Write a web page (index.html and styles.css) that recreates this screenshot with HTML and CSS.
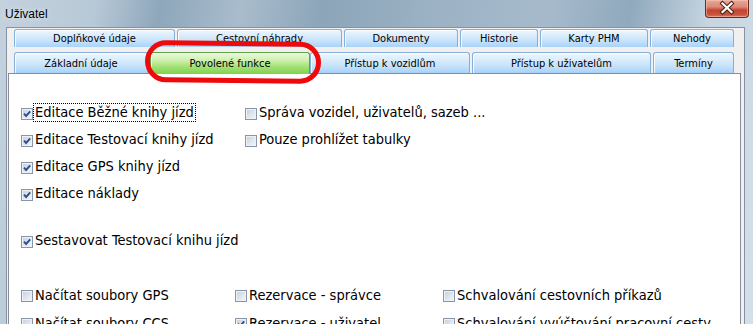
FILE: index.html
```html
<!DOCTYPE html>
<html lang="cs">
<head>
    <meta charset="UTF-8">
    <meta name="viewport" content="width=device-width, initial-scale=1.0">
    <title>Uživatel</title>
    <link rel="stylesheet" href="styles.css">
</head>
<body>
    <div class="window">
        <div class="titlebar">
            <span class="title">Uživatel</span>
            <div class="close">
                <svg width="44" height="18" viewBox="0 0 44 18">
                    <path d="M17.5 4.5 L26.5 13 M26.5 4.5 L17.5 13" stroke="#4b1f18" stroke-width="4.2" stroke-linecap="square" fill="none"/>
                    <path d="M17.5 4.5 L26.5 13 M26.5 4.5 L17.5 13" stroke="#ffffff" stroke-width="2.2" stroke-linecap="square" fill="none"/>
                </svg>
            </div>
        </div>

        <div class="client">
            <div class="tabs">
                <div class="tab-row row-back">
                    <div class="tab">Doplňkové údaje</div>
                    <div class="tab">Cestovní náhrady</div>
                    <div class="tab">Dokumenty</div>
                    <div class="tab">Historie</div>
                    <div class="tab">Karty PHM</div>
                    <div class="tab">Nehody</div>
                </div>
                <div class="tab-row row-front">
                    <div class="tab">Základní údaje</div>
                    <div class="tab active">Povolené funkce</div>
                    <div class="tab">Přístup k vozidlům</div>
                    <div class="tab">Přístup k uživatelům</div>
                    <div class="tab">Termíny</div>
                </div>
            </div>

            <div class="panel">
                <div class="group group-top">
                    <div class="col">
                        <div class="item">
                            <span class="cb on"><svg width="12" height="12" viewBox="0 0 12 12"><path d="M3 5.6 L5.1 8 L9.2 3.4" stroke="#2d4f8e" stroke-width="1.9" fill="none"/></svg></span>
                            <span class="lbl focus">Editace Běžné knihy jízd</span>
                        </div>
                        <div class="item">
                            <span class="cb on"><svg width="12" height="12" viewBox="0 0 12 12"><path d="M3 5.6 L5.1 8 L9.2 3.4" stroke="#2d4f8e" stroke-width="1.9" fill="none"/></svg></span>
                            <span class="lbl">Editace Testovací knihy jízd</span>
                        </div>
                        <div class="item">
                            <span class="cb on"><svg width="12" height="12" viewBox="0 0 12 12"><path d="M3 5.6 L5.1 8 L9.2 3.4" stroke="#2d4f8e" stroke-width="1.9" fill="none"/></svg></span>
                            <span class="lbl">Editace GPS knihy jízd</span>
                        </div>
                        <div class="item">
                            <span class="cb on"><svg width="12" height="12" viewBox="0 0 12 12"><path d="M3 5.6 L5.1 8 L9.2 3.4" stroke="#2d4f8e" stroke-width="1.9" fill="none"/></svg></span>
                            <span class="lbl">Editace náklady</span>
                        </div>
                    </div>
                    <div class="col">
                        <div class="item">
                            <span class="cb"></span>
                            <span class="lbl">Správa vozidel, uživatelů, sazeb ...</span>
                        </div>
                        <div class="item">
                            <span class="cb"></span>
                            <span class="lbl">Pouze prohlížet tabulky</span>
                        </div>
                    </div>
                </div>

                <div class="item single">
                    <span class="cb on"><svg width="12" height="12" viewBox="0 0 12 12"><path d="M3 5.6 L5.1 8 L9.2 3.4" stroke="#2d4f8e" stroke-width="1.9" fill="none"/></svg></span>
                    <span class="lbl">Sestavovat Testovací knihu jízd</span>
                </div>

                <div class="group group-bottom">
                    <div class="item">
                        <span class="cb"></span>
                        <span class="lbl">Načítat soubory GPS</span>
                    </div>
                    <div class="item">
                        <span class="cb"></span>
                        <span class="lbl">Rezervace - správce</span>
                    </div>
                    <div class="item">
                        <span class="cb"></span>
                        <span class="lbl">Schvalování cestovních příkazů</span>
                    </div>
                    <div class="item">
                        <span class="cb"></span>
                        <span class="lbl">Načítat soubory CCS</span>
                    </div>
                    <div class="item">
                        <span class="cb on"><svg width="12" height="12" viewBox="0 0 12 12"><path d="M3 5.6 L5.1 8 L9.2 3.4" stroke="#2d4f8e" stroke-width="1.9" fill="none"/></svg></span>
                        <span class="lbl">Rezervace - uživatel</span>
                    </div>
                    <div class="item">
                        <span class="cb"></span>
                        <span class="lbl">Schvalování vyúčtování pracovní cesty</span>
                    </div>
                </div>
            </div>
        </div>

        <!-- red marker drawn over the selected tab -->
        <svg class="marker" width="182" height="48" viewBox="0 0 182 48">
            <rect x="4.5" y="4.5" width="171" height="37" rx="18.5" ry="18.5" fill="none" stroke="#ee0a0a" stroke-width="5"/>
        </svg>
    </div>
</body>
</html>
```

FILE: styles.css
```css
html, body {
    margin: 0;
    padding: 0;
}
body {
    width: 753px;
    height: 324px;
    overflow: hidden;
    font-family: "DejaVu Sans Condensed", "Liberation Sans", sans-serif;
    font-stretch: condensed;
    color: #000;
}
.window {
    position: relative;
    width: 753px;
    height: 324px;
    background: linear-gradient(100deg, #c4d2de 0%, #b7c8d6 12%, #8ea7bb 20%, #a9bccc 30%, #8ca5b9 40%, #9db3c5 55%, #a6bacb 68%, #90a9bd 78%, #c6d5e1 88%, #d3e0ea 100%);
}

/* title bar */
.titlebar {
    height: 27px;
    display: flex;
    align-items: center;
    justify-content: space-between;
}
.title {
    margin-left: 5px;
    font-family: "Liberation Sans", sans-serif;
    font-stretch: normal;
    font-size: 12px;
    text-shadow: 0 0 6px rgba(255, 255, 255, 0.8);
    margin-top: 1px;
}
.close {
    align-self: flex-start;
    width: 44px;
    height: 18px;
    margin-right: 4px;
    box-sizing: border-box;
    border: 1px solid #6a2a20;
    border-top: none;
    border-radius: 0 0 4px 4px;
    background: linear-gradient(#e9a797 0%, #dc8a78 40%, #c4442f 60%, #c9533c 85%, #d9775d 100%);
    box-shadow: inset 0 0 0 1px rgba(255, 210, 200, 0.45);
}
.close svg {
    display: block;
    margin: -1px 0 0 -1px;
}

/* client area */
.client {
    height: 297px;
    margin: 0 8px 0 6px;
    box-sizing: border-box;
    border: 1px solid #8393a4;
    border-bottom: none;
    background: #f0f0f0;
    padding-top: 1px;
    display: flex;
    flex-direction: column;
}

/* tabs */
.tabs {
    padding-left: 7px;
}
.tab-row {
    display: grid;
    column-gap: 2px;
}
.row-back {
    grid-template-columns: 161px 165px 114px 78px 108px 84px;
    height: 18px;
    margin-bottom: 5px;
}
.row-front {
    grid-template-columns: 134px 158px 160px 179px 81px;
    height: 22px;
    margin-bottom: -1px;
    position: relative;
    z-index: 1;
}
.tab {
    box-sizing: border-box;
    border: 1px solid #86afd9;
    border-bottom: none;
    border-radius: 3px 3px 0 0;
    background: linear-gradient(#eef6fe 0%, #d9ecfc 35%, #c6e2fa 65%, #a9d2f7 100%);
    box-shadow: inset 1px 1px 0 rgba(255, 255, 255, 0.8);
    font-size: 11px;
    display: flex;
    align-items: center;
    justify-content: center;
    white-space: nowrap;
}
.row-front .tab {
    height: 21px;
}
.tab.active {
    height: 22px;
    margin-right: -2px;
    border-color: #5ea446;
    background: linear-gradient(#ebf9df 0%, #cdf0ad 35%, #a3e177 65%, #80d24d 100%);
    box-shadow: inset 1px 1px 0 rgba(255, 255, 255, 0.7);
    position: relative;
    z-index: 2;
}

/* panel */
.panel {
    flex: 1;
    margin: 0 3px 0 1px;
    border: 1px solid #898c95;
    border-bottom: none;
    background: #fff;
    padding: 25px 0 0 12px;
}
.group-top {
    display: grid;
    grid-template-columns: 224px auto;
}
.group-bottom {
    display: grid;
    grid-template-columns: 214px 208px auto;
    grid-auto-rows: 28px;
    margin-top: 27px;
}
.item {
    display: flex;
    align-items: center;
    height: 27px;
    font-size: 14.5px;
    white-space: nowrap;
}
.group-bottom .item {
    height: 28px;
}
.single {
    margin-top: 20px;
}
.cb {
    flex: none;
    width: 12px;
    height: 12px;
    box-sizing: border-box;
    border: 1px solid #8796a8;
    background: linear-gradient(135deg, #c3cdd9 0%, #dde4ec 50%, #f6f8fa 100%);
    box-shadow: inset 0 0 0 1px #eef2f6;
    margin-top: 2px;
}
.cb svg {
    display: block;
    margin: -1px;
}
.lbl {
    line-height: 17px;
    padding: 0 1px;
    border: 1px dotted transparent;
}
.lbl.focus {
    border-color: #000;
}

.marker {
    position: absolute;
    left: 143px;
    top: 39px;
    transform: rotate(0.6deg);
    z-index: 5;
}
```
